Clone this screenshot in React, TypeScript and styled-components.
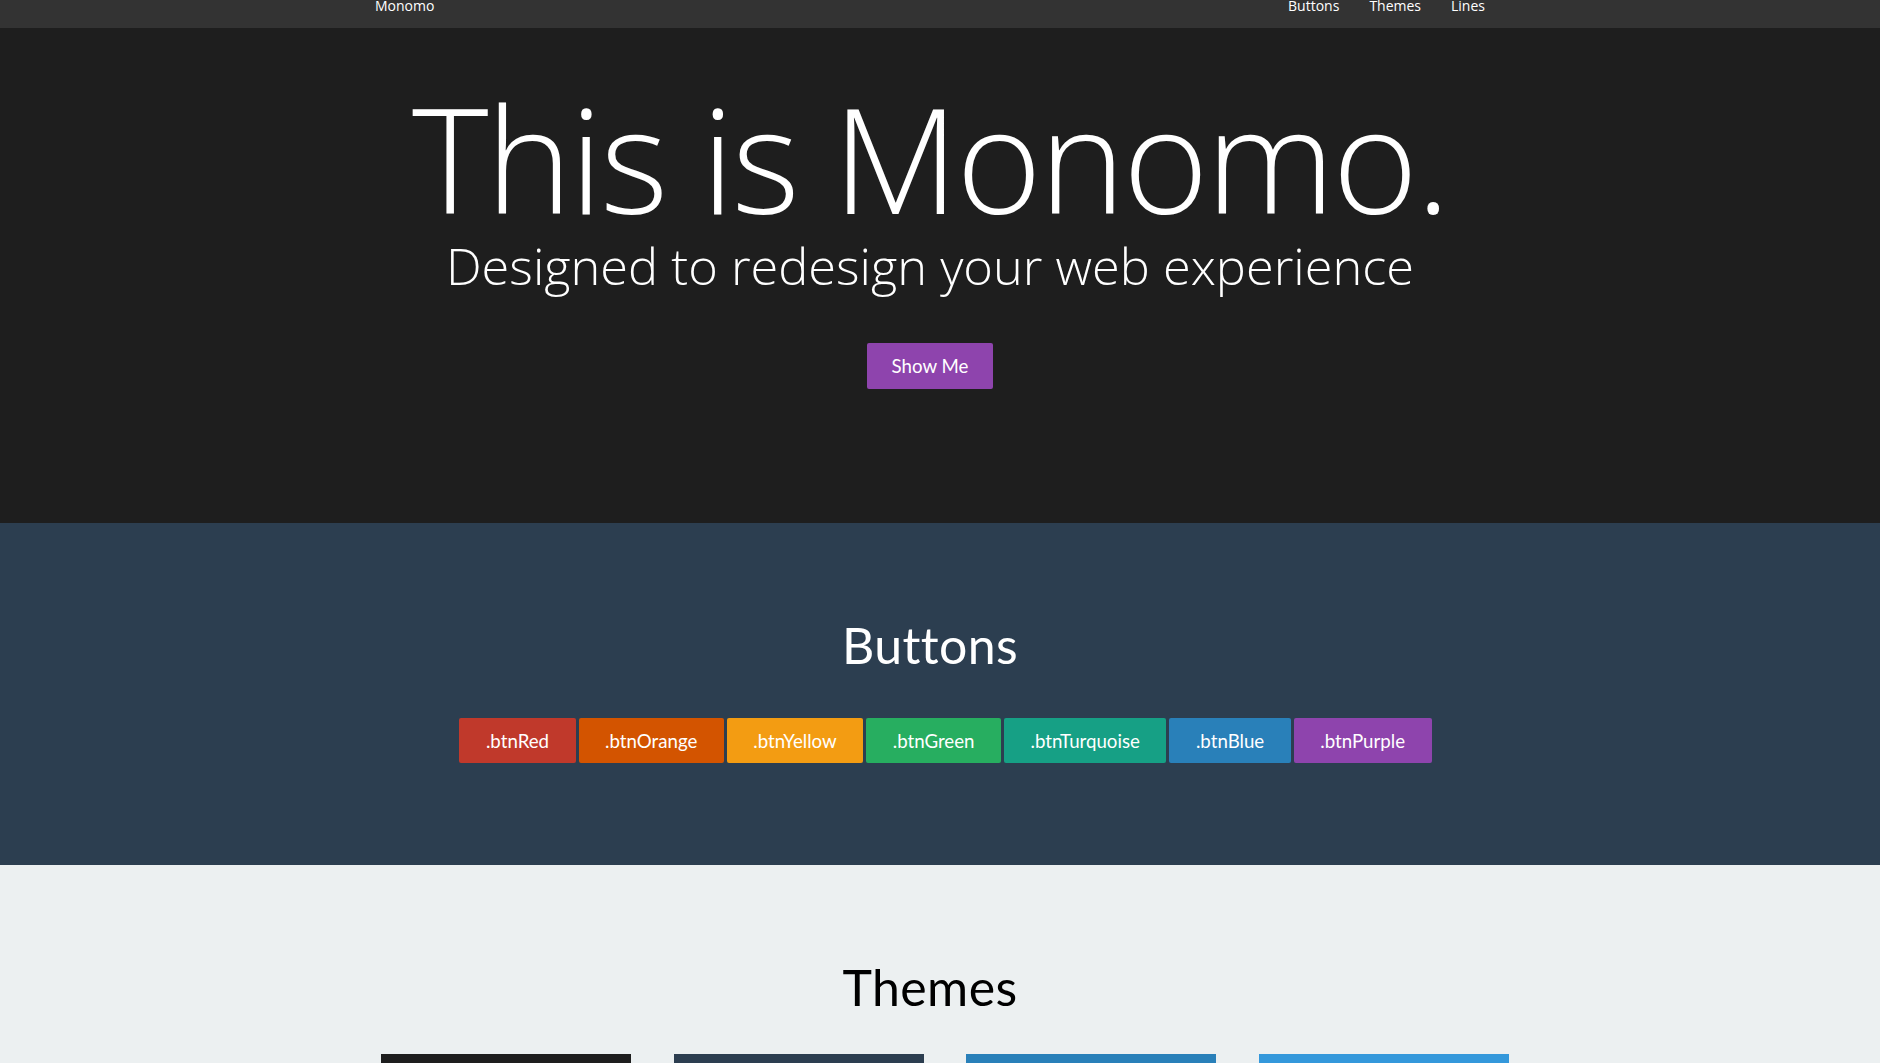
import React from "react";
import styled, { createGlobalStyle } from "styled-components";

const GlobalStyle = createGlobalStyle`
  html, body { margin: 0; padding: 0; }
  body {
    background: #ecf0f1;
    font-family: "Open Sans", "Liberation Sans", sans-serif;
    -webkit-font-smoothing: antialiased;
  }
  * { box-sizing: border-box; }
`;

const NavBar = styled.nav`
  height: 28px;
  background: #333333;
  overflow: hidden;
`;

const NavInner = styled.div`
  width: 1170px;
  margin: 0 auto;
  padding: 0 40px 0 20px;
  display: flex;
  justify-content: space-between;
  align-items: flex-start;
`;

const Brand = styled.a`
  font-family: "Open Sans", sans-serif;
  font-size: 14px;
  line-height: 14px;
  margin-top: -1px;
  color: #ffffff;
  text-decoration: none;
`;

const NavLinks = styled.ul`
  list-style: none;
  margin: -1px 0 0;
  padding: 0;
  display: flex;
  gap: 30px;
`;

const NavItem = styled.li`
  font-size: 14px;
  line-height: 14px;
`;

const NavLink = styled.a`
  font-family: "Open Sans", sans-serif;
  font-size: 14px;
  line-height: 14px;
  color: #ffffff;
  text-decoration: none;
`;

const Hero = styled.header`
  background: #1e1e1e;
  padding: 55px 20px 134px 0;
  display: flex;
  flex-direction: column;
  align-items: center;
`;

const Title = styled.h1`
  margin: 0;
  font-family: "Open Sans", sans-serif;
  font-weight: 300;
  font-size: 146px;
  line-height: 150px;
  letter-spacing: -2.5px;
  color: #ffffff;
`;

const Subtitle = styled.h2`
  margin: 4px 0 0;
  font-family: "Open Sans", sans-serif;
  font-weight: 300;
  font-size: 50.5px;
  line-height: 57.6px;
  color: #ffffff;
`;

const Btn = styled.button<{ $bg: string }>`
  height: 45px;
  padding: 0 26.5px;
  border: none;
  border-radius: 2px;
  background: ${(p) => p.$bg};
  color: #ffffff;
  font-family: Lato, "Liberation Sans", sans-serif;
  font-size: 18.7px;
  cursor: pointer;
`;

const HeroBtn = styled(Btn)`
  margin-top: 48px;
  height: 46px;
  padding: 0 25px;
`;

const Section = styled.section<{ $bg: string; $fg: string }>`
  background: ${(p) => p.$bg};
  color: ${(p) => p.$fg};
  padding: 96px 0 102px;
  display: flex;
  flex-direction: column;
  align-items: center;
`;

const SectionTitle = styled.h2`
  margin: 0 20px 0 0;
  font-family: Lato, "Liberation Sans", sans-serif;
  font-weight: 400;
  font-size: 50px;
  line-height: 52.8px;
  letter-spacing: 0.4px;
`;

const BtnRow = styled.div`
  margin-top: 47px;
  padding-left: 11px;
  display: flex;
  gap: 3px;
`;

const CardGrid = styled.div`
  margin-top: 40px;
  padding-left: 10px;
  display: grid;
  grid-template-columns: repeat(4, 250px);
  column-gap: 42.5px;
`;

const ThemeCard = styled.div<{ $bg: string }>`
  height: 250px;
  background: ${(p) => p.$bg};
`;

const buttons = [
  { label: ".btnRed", color: "#c0392b" },
  { label: ".btnOrange", color: "#d35400" },
  { label: ".btnYellow", color: "#f39c12" },
  { label: ".btnGreen", color: "#27ae60" },
  { label: ".btnTurquoise", color: "#16a085" },
  { label: ".btnBlue", color: "#2980b9" },
  { label: ".btnPurple", color: "#8e44ad" },
];

const themes = ["#1e1e1e", "#2c3e50", "#2980b9", "#3498db"];

export default function App() {
  return (
    <>
      <GlobalStyle />
      <NavBar>
        <NavInner>
          <Brand href="#">Monomo</Brand>
          <NavLinks>
            <NavItem><NavLink href="#">Buttons</NavLink></NavItem>
            <NavItem><NavLink href="#">Themes</NavLink></NavItem>
            <NavItem><NavLink href="#">Lines</NavLink></NavItem>
          </NavLinks>
        </NavInner>
      </NavBar>
      <Hero>
        <Title>This is Monomo.</Title>
        <Subtitle>Designed to redesign your web experience</Subtitle>
        <HeroBtn $bg="#8e44ad">Show Me</HeroBtn>
      </Hero>
      <Section $bg="#2c3e50" $fg="#ffffff">
        <SectionTitle>Buttons</SectionTitle>
        <BtnRow>
          {buttons.map((b) => (
            <Btn key={b.label} $bg={b.color}>{b.label}</Btn>
          ))}
        </BtnRow>
      </Section>
      <Section $bg="#ecf0f1" $fg="#000000">
        <SectionTitle>Themes</SectionTitle>
        <CardGrid>
          {themes.map((c) => (
            <ThemeCard key={c} $bg={c} />
          ))}
        </CardGrid>
      </Section>
    </>
  );
}
